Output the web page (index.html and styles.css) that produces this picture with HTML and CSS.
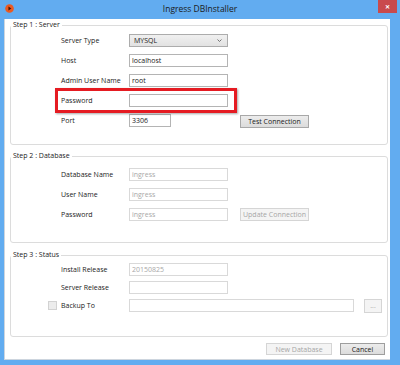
FILE: index.html
```html
<!DOCTYPE html>
<html>
<head>
    <title>Ingress DBInstaller</title>
    <link rel="stylesheet" href="styles.css">
</head>
<body>
<div class="window">
    <div class="titlebar">
        <svg class="app-icon" width="9" height="9" viewBox="0 0 10 10">
            <circle cx="5" cy="5" r="4.8" fill="#ea5a22"/>
            <path d="M3.8 2.9 L7.1 5 L3.8 7.1 Z" fill="#40160a"/>
        </svg>
        <span class="title">Ingress DBInstaller</span>
        <span class="close">&#x2715;</span>
    </div>
    <div class="client">
        <fieldset class="group group-server">
            <legend>Step 1 : Server</legend>
            <div class="rows">
                <div class="row">
                    <span class="check-col"></span>
                    <label>Server Type</label>
                    <div class="combo">
                        <span>MYSQL</span>
                        <svg width="5" height="3" viewBox="0 0 5 3"><path d="M0.5 0.5 L2.5 2.5 L4.5 0.5" fill="none" stroke="#666" stroke-width="0.9"/></svg>
                    </div>
                </div>
                <div class="row">
                    <span class="check-col"></span>
                    <label>Host</label>
                    <input class="field" type="text" value="localhost">
                </div>
                <div class="row">
                    <span class="check-col"></span>
                    <label>Admin User Name</label>
                    <input class="field" type="text" value="root">
                </div>
                <div class="row highlighted">
                    <span class="check-col"></span>
                    <label>Password</label>
                    <input class="field" type="password" value="">
                    <span class="highlight"></span>
                </div>
                <div class="row">
                    <span class="check-col"></span>
                    <label>Port</label>
                    <input class="field field-port" type="text" value="3306">
                    <button class="btn btn-test">Test Connection</button>
                </div>
            </div>
        </fieldset>

        <fieldset class="group group-database">
            <legend>Step 2 : Database</legend>
            <div class="rows">
                <div class="row">
                    <span class="check-col"></span>
                    <label>Database Name</label>
                    <input class="field off" type="text" value="ingress" disabled>
                </div>
                <div class="row">
                    <span class="check-col"></span>
                    <label>User Name</label>
                    <input class="field off" type="text" value="ingress" disabled>
                </div>
                <div class="row">
                    <span class="check-col"></span>
                    <label>Password</label>
                    <input class="field off" type="text" value="ingress" disabled>
                    <button class="btn btn-update" disabled>Update Connection</button>
                </div>
            </div>
        </fieldset>

        <fieldset class="group group-status">
            <legend>Step 3 : Status</legend>
            <div class="rows">
                <div class="row">
                    <span class="check-col"></span>
                    <label>Install Release</label>
                    <input class="field off" type="text" value="20150825" disabled>
                </div>
                <div class="row">
                    <span class="check-col"></span>
                    <label>Server Release</label>
                    <input class="field off" type="text" value="" disabled>
                </div>
                <div class="row">
                    <span class="check-col"><span class="checkbox"></span></span>
                    <label>Backup To</label>
                    <input class="field off field-backup" type="text" value="" disabled>
                    <button class="btn btn-browse" disabled>...</button>
                </div>
            </div>
        </fieldset>

        <div class="actions">
            <button class="btn btn-new" disabled>New Database</button>
            <button class="btn btn-cancel">Cancel</button>
        </div>
    </div>
</div>
</body>
</html>
```

FILE: styles.css
```css
* {
    box-sizing: border-box;
}
body {
    margin: 0;
    font-family: "Open Sans", sans-serif;
    font-size: 7px;
    color: #1a1a1a;
}
.window {
    width: 400px;
    height: 365px;
    background-color: #62acf0;
    display: flex;
    flex-direction: column;
}
.titlebar {
    height: 19px;
    display: grid;
    grid-template-columns: 1fr auto 1fr;
    align-items: start;
}
.app-icon {
    margin: 4px 0 0 5px;
}
.title {
    font-size: 8.5px;
    line-height: 18px;
    color: #1b1b1b;
}
.close {
    justify-self: end;
    margin-right: 3px;
    width: 19px;
    height: 13px;
    background-color: #c94a4c;
    color: #fff;
    font-size: 6px;
    font-weight: bold;
    display: flex;
    align-items: center;
    justify-content: center;
}
.client {
    margin: 0 10px 0 4px;
    height: 341px;
    background-color: #fff;
    border-left: 1px solid #cdd5de;
    border-bottom: 1px solid #cdd5de;
    padding: 1px 2px 0 5px;
}
.group {
    margin: 0;
    border: 1px solid #dcdcdc;
    border-radius: 3px;
    min-width: 0;
}
.group legend {
    padding: 0 2px;
    line-height: 10px;
    font-size: 7px;
}
.group-server {
    padding: 4px 0 17px 0;
}
.group-database {
    margin-top: 6px;
    padding: 7px 0 21px 0;
}
.group-status {
    margin-top: 7px;
    padding: 3px 0 24px 0;
}
.rows {
    display: flex;
    flex-direction: column;
    gap: 7px;
    margin-left: 37px;
}
.group-status .rows {
    gap: 5px;
}
.row {
    display: flex;
    align-items: center;
    height: 13px;
}
.highlighted {
    position: relative;
}
.highlight {
    position: absolute;
    left: 7px;
    top: -6px;
    width: 182px;
    height: 25px;
    border: 3px solid #e51b22;
    box-shadow: 1px 1px 2px rgba(0, 0, 0, 0.35);
}
.check-col {
    width: 13px;
    display: flex;
    align-items: center;
}
.checkbox {
    width: 9px;
    height: 9px;
    background-color: #ececec;
    border: 1px solid #d2d2d2;
}
label {
    width: 68px;
}
.field {
    width: 99px;
    height: 13px;
    margin: 0;
    padding: 0 2px;
    border: 1px solid #b4b4b4;
    background-color: #fff;
    font-family: inherit;
    font-size: 7px;
    color: #1a1a1a;
    outline: none;
}
.field.off {
    border-color: #d9d9d9;
    color: #a8a8a8;
    background-color: #fff;
}
.field-port {
    width: 42px;
}
.field-backup {
    width: 225px;
}
.combo {
    width: 99px;
    height: 13px;
    border: 1px solid #acacac;
    background: linear-gradient(#f0f0f0, #e2e2e2);
    display: flex;
    align-items: center;
    justify-content: space-between;
    padding: 0 5px 0 4px;
}
.btn {
    height: 13px;
    padding: 0;
    font-family: inherit;
    font-size: 7px;
    color: #1a1a1a;
    border: 1px solid #a8a8a8;
    background: linear-gradient(#ececec, #dcdcdc);
}
.btn:disabled {
    color: #a6a6a6;
    border-color: #d5d5d5;
    background: #f4f4f4;
}
.btn-test {
    width: 69px;
    margin-left: 69px;
    position: relative;
    top: 1px;
}
.btn-update {
    width: 69px;
    margin-left: 12px;
}
.btn-browse {
    width: 18px;
    height: 14px;
    margin-left: 10px;
}
.actions {
    display: flex;
    justify-content: flex-end;
    gap: 8px;
    margin-top: 6px;
    padding-right: 3px;
}
.btn-new {
    width: 66px;
    height: 12px;
}
.btn-cancel {
    width: 45px;
    height: 12px;
    border-color: #9e9e9e;
}
```
